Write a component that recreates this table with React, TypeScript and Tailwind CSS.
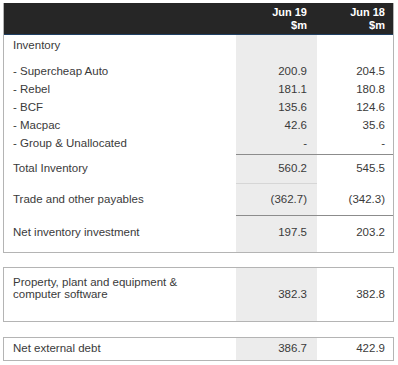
import React from 'react';

type Row = { label: string; a: string; b: string };

const detailRows: Row[] = [
  { label: '- Supercheap Auto', a: '200.9', b: '204.5' },
  { label: '- Rebel', a: '181.1', b: '180.8' },
  { label: '- BCF', a: '135.6', b: '124.6' },
  { label: '- Macpac', a: '42.6', b: '35.6' },
  { label: '- Group & Unallocated', a: '-', b: '-' },
];

const App: React.FC = () => {
  return (
    <div
      className="w-[398px] h-[365px] bg-white pt-[3px] pl-[3px] text-[11.5px] text-[#3a3a3a]"
      style={{ fontFamily: '"Liberation Sans", Arial, sans-serif' }}
    >
      <div className="w-[391px]">
        {/* main inventory table */}
        <div className="border-x border-b border-[#b4b4b4]">
          <div className="flex h-[32px] bg-[#262626] border-b border-[#1f3f62] font-bold text-white text-[11px] leading-[13px]">
            <div className="w-[232px]" />
            <div className="w-[81px] flex flex-col items-end justify-center pr-[10px]">
              <span>Jun 19</span>
              <span>$m</span>
            </div>
            <div className="flex-1 flex flex-col items-end justify-center pr-[8px]">
              <span>Jun 18</span>
              <span>$m</span>
            </div>
          </div>

          <div className="flex h-[28px]">
            <div className="w-[232px] pl-[9px] pt-[2px]">Inventory</div>
            <div className="w-[81px] bg-[#ececec]" />
            <div className="flex-1" />
          </div>

          {detailRows.map((r) => (
            <div key={r.label} className="flex h-[18px]">
              <div className="w-[232px] flex items-center pl-[9px]">{r.label}</div>
              <div className="w-[81px] bg-[#ececec] flex items-center justify-end pr-[10px]">{r.a}</div>
              <div className="flex-1 flex items-center justify-end pr-[8px]">{r.b}</div>
            </div>
          ))}

          <div className="flex h-[1px]">
            <div className="w-[232px]" />
            <div className="w-[81px] bg-[#ececec]" />
            <div className="flex-1" />
          </div>

          {/* total inventory */}
          <div className="flex h-[30px]">
            <div className="w-[232px] flex items-center pl-[9px]">Total Inventory</div>
            <div className="w-[81px] bg-[#ececec] border-t border-b border-t-[#8c8c8c] border-b-[#d6d6d6] flex items-center justify-end pr-[10px]">560.2</div>
            <div className="flex-1 border-t border-[#8c8c8c] flex items-center justify-end pr-[8px] pb-[1px]">545.5</div>
          </div>

          <div className="flex h-[31px]">
            <div className="w-[232px] flex items-center pl-[9px]">Trade and other payables</div>
            <div className="w-[81px] bg-[#ececec] flex items-center justify-end pr-[10px]">(362.7)</div>
            <div className="flex-1 flex items-center justify-end pr-[8px]">(342.3)</div>
          </div>

          <div className="flex h-[37px]">
            <div className="w-[232px] flex items-center pl-[9px] pb-[2px]">Net inventory investment</div>
            <div className="w-[81px] bg-[#ececec] border-t border-[#8c8c8c] flex items-center justify-end pr-[10px] pb-[2px]">197.5</div>
            <div className="flex-1 border-t border-[#8c8c8c] flex items-center justify-end pr-[8px] pb-[2px]">203.2</div>
          </div>
        </div>

        {/* property, plant and equipment */}
        <div className="mt-[14px] border border-[#b4b4b4] flex h-[55px]">
          <div className="w-[232px] pl-[9px] pt-[8px] leading-[12px]">
            Property, plant and equipment &amp;
            <br />
            computer software
          </div>
          <div className="w-[81px] bg-[#ececec] flex items-center justify-end pr-[10px]">382.3</div>
          <div className="flex-1 flex items-center justify-end pr-[8px]">382.8</div>
        </div>

        {/* net external debt */}
        <div className="mt-[15px] border border-[#b4b4b4] flex h-[24px]">
          <div className="w-[232px] flex items-center pl-[9px]">Net external debt</div>
          <div className="w-[81px] bg-[#ececec] flex items-center justify-end pr-[10px]">386.7</div>
          <div className="flex-1 flex items-center justify-end pr-[8px]">422.9</div>
        </div>
      </div>
    </div>
  );
};

export default App;
